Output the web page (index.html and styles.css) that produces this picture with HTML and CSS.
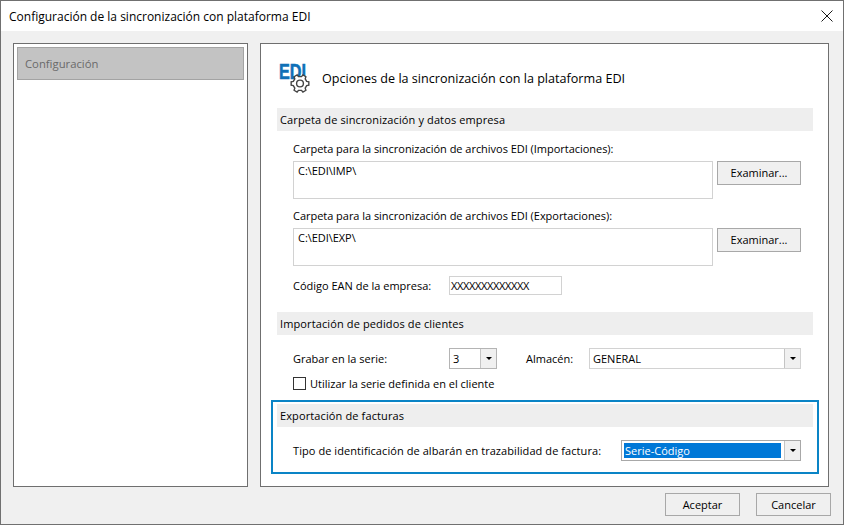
FILE: index.html
```html
<!DOCTYPE html>
<html lang="es">
<head>
    <meta charset="UTF-8">
    <meta name="viewport" content="width=device-width, initial-scale=1.0">
    <title>Configuración de la sincronización con plataforma EDI</title>
    <link rel="stylesheet" href="styles.css">
</head>
<body>
    <div class="window">
        <div class="titlebar">
            <span class="title">Configuración de la sincronización con plataforma EDI</span>
            <svg class="close" width="12" height="12" viewBox="0 0 12 12">
                <path d="M.5.5l11 11M11.5.5l-11 11" stroke="#1a1a1a" fill="none"/>
            </svg>
        </div>

        <div class="main">
            <div class="sidebar">
                <div class="side-item">Configuración</div>
            </div>

            <div class="panel">
                <div class="heading">
                    <svg class="logo" width="34" height="32" viewBox="0 0 34 32">
                        <text x="1" y="17" class="logo-text" textLength="27" lengthAdjust="spacingAndGlyphs">EDI</text>
                        <path transform="translate(22 21.5)" d="M6.66-2.16L8.83-1.72V1.72L6.66 2.16 5.2 4.68 5.9 6.79 2.93 8.51 1.46 6.85H-1.46L-2.93 8.51-5.9 6.79-5.2 4.68-6.66 2.16-8.83 1.72V-1.72L-6.66-2.16-5.2-4.68-5.9-6.79-2.93-8.51-1.46-6.85H1.46L2.93-8.51 5.9-6.79 5.2-4.68Z" fill="#fff" stroke="#444" stroke-width="1.4"/>
                        <circle cx="22" cy="21.5" r="3.4" fill="#fff" stroke="#444" stroke-width="1.4"/>
                    </svg>
                    <span class="heading-text">Opciones de la sincronización con la plataforma EDI</span>
                </div>

                <div class="section-head">Carpeta de sincronización y datos empresa</div>
                <div class="section-body">
                    <div class="field-label first">Carpeta para la sincronización de archivos EDI (Importaciones):</div>
                    <div class="path-row">
                        <div class="path-box">C:\EDI\IMP\</div>
                        <div class="btn btn-browse">Examinar...</div>
                    </div>
                    <div class="field-label">Carpeta para la sincronización de archivos EDI (Exportaciones):</div>
                    <div class="path-row">
                        <div class="path-box">C:\EDI\EXP\</div>
                        <div class="btn btn-browse">Examinar...</div>
                    </div>
                    <div class="ean-row">
                        <span class="ean-label">Código EAN de la empresa:</span>
                        <div class="ean-box">XXXXXXXXXXXXX</div>
                    </div>
                </div>

                <div class="section-head">Importación de pedidos de clientes</div>
                <div class="section-body section-import">
                    <div class="series-row">
                        <span class="series-label">Grabar en la serie:</span>
                        <div class="combo combo-series">
                            <span class="combo-value">3</span>
                            <span class="combo-arrow"></span>
                        </div>
                        <span class="store-label">Almacén:</span>
                        <div class="combo combo-store">
                            <span class="combo-value">GENERAL</span>
                            <span class="combo-arrow"></span>
                        </div>
                    </div>
                    <div class="check-row">
                        <span class="checkbox"></span>
                        <span>Utilizar la serie definida en el cliente</span>
                    </div>
                </div>

                <div class="highlight">
                    <div class="section-head">Exportación de facturas</div>
                    <div class="type-row">
                        <span class="type-label">Tipo de identificación de albarán en trazabilidad de factura:</span>
                        <div class="combo combo-type">
                            <span class="combo-value selected">Serie-Código</span>
                            <span class="combo-arrow"></span>
                        </div>
                    </div>
                </div>
            </div>
        </div>

        <div class="footer">
            <div class="btn btn-footer">Aceptar</div>
            <div class="btn btn-footer">Cancelar</div>
        </div>
    </div>
</body>
</html>
```

FILE: styles.css
```css
* {
    box-sizing: border-box;
}
html, body {
    margin: 0;
    height: 100%;
}
body {
    font-family: "Open Sans", "Noto Sans", sans-serif;
    font-size: 11px;
    color: #000;
    overflow: hidden;
}
.window {
    width: 844px;
    height: 525px;
    border: 1px solid #707070;
    background-color: #f0f0f0;
    display: flex;
    flex-direction: column;
}
.titlebar {
    height: 30px;
    background-color: #fff;
    display: flex;
    align-items: center;
    justify-content: space-between;
    padding: 0 10px 0 8px;
    flex: none;
}
.title {
    font-size: 12px;
}
.main {
    height: 458px;
    padding: 12px 14px 0 12px;
    display: flex;
    gap: 12px;
    flex: none;
}
.sidebar {
    width: 235px;
    height: 444px;
    background-color: #fff;
    border: 1px solid #6f6f6f;
    padding: 3px;
}
.side-item {
    height: 33px;
    line-height: 31px;
    padding-left: 7px;
    background-color: #c3c3c3;
    border: 1px solid #a3a3a3;
    color: #6a6a6a;
    font-size: 11.3px;
}
.panel {
    width: 569px;
    height: 444px;
    background-color: #fff;
    border: 1px solid #6f6f6f;
    padding: 0 15px 0 16px;
}
.heading {
    height: 64px;
    display: flex;
    align-items: center;
    padding-top: 4px;
}
.logo {
    margin-left: 1px;
    margin-right: 10px;
    flex: none;
}
.logo-text {
    font-family: "Liberation Sans", sans-serif;
    font-weight: 700;
    font-size: 22px;
    fill: #0f70b7;
    stroke: #0f70b7;
    stroke-width: .6px;
}
.heading-text {
    font-size: 12.6px;
}
.section-head {
    height: 23px;
    line-height: 23px;
    padding-left: 3px;
    background-color: #eeeeee;
    letter-spacing: .12px;
}
.section-body {
    padding-left: 16px;
    padding-bottom: 17px;
}
.section-import {
    padding-bottom: 8px;
}
.field-label {
    height: 17px;
    line-height: 17px;
    margin-top: 8px;
    letter-spacing: -.03px;
}
.field-label.first {
    margin-top: 9px;
}
.path-row {
    display: flex;
    gap: 4px;
    margin-top: 4px;
}
.path-box {
    width: 420px;
    height: 38px;
    border: 1px solid #d2d2d2;
    padding: 1px 4px;
    line-height: 16px;
    letter-spacing: -.05px;
}
.btn {
    height: 24px;
    line-height: 22px;
    text-align: center;
    background-color: #f0f0f0;
    border: 1px solid #a8a8a8;
}
.btn-browse {
    width: 84px;
}
.ean-row {
    display: flex;
    align-items: center;
    height: 19px;
    margin-top: 10px;
}
.ean-label {
    width: 156px;
}
.ean-box {
    width: 113px;
    height: 19px;
    line-height: 17px;
    border: 1px solid #d2d2d2;
    padding-left: 1px;
    letter-spacing: -.35px;
}
.series-row {
    display: flex;
    align-items: center;
    height: 21px;
    margin-top: 13px;
}
.series-label {
    width: 156px;
}
.store-label {
    width: 63px;
    margin-left: 29px;
}
.combo {
    height: 21px;
    background-color: #fff;
    border: 1px solid #b4b4b4;
    display: flex;
}
.combo-series {
    width: 48px;
}
.combo-store {
    width: 212px;
    border-color: #d2d2d2;
}
.combo-type {
    width: 180px;
    border-color: #a8a8a8;
    padding: 2px 0 2px 2px;
}
.combo-value {
    flex: 1;
    line-height: 19px;
    padding-left: 3px;
}
.combo-value.selected {
    flex: none;
    width: 157px;
    height: 15px;
    line-height: 15px;
    padding-left: 1px;
    background-color: #0078d7;
    color: #fff;
}
.combo-arrow {
    width: 16px;
    margin-left: auto;
    background-color: #f0f0f0;
    border-left: 1px solid #c4c4c4;
    display: flex;
    align-items: center;
    justify-content: center;
}
.combo-type .combo-arrow {
    margin: -2px 0 -2px 3px;
}
.combo-arrow::after {
    content: "";
    border-left: 3px solid transparent;
    border-right: 3px solid transparent;
    border-top: 3px solid #000;
}
.check-row {
    display: flex;
    align-items: center;
    gap: 4px;
    height: 17px;
    margin-top: 6px;
}
.checkbox {
    width: 13px;
    height: 13px;
    background-color: #fff;
    border: 1px solid #333;
}
.highlight {
    margin: 0 -6px;
    height: 74px;
    border: 2px solid #0a84c6;
    padding: 2px 4px 0;
}
.type-row {
    display: flex;
    align-items: center;
    padding-left: 16px;
    margin-top: 13px;
}
.type-label {
    width: 328px;
    letter-spacing: .07px;
}
.footer {
    display: flex;
    gap: 16px;
    padding: 4px 12px 0 0;
    justify-content: flex-end;
}
.btn-footer {
    width: 75px;
    height: 23px;
    line-height: 21px;
}
```
